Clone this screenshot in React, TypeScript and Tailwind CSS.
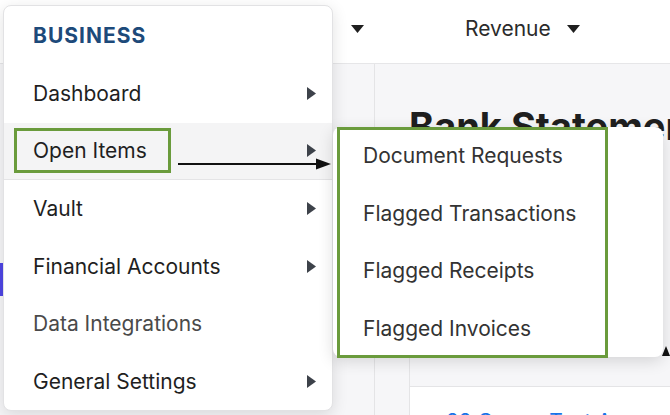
import React from 'react';

const mainItems = [
  { label: 'Dashboard', sub: true },
  { label: 'Open Items', sub: true, active: true },
  { label: 'Vault', sub: true },
  { label: 'Financial Accounts', sub: true },
  { label: 'Data Integrations', sub: false },
  { label: 'General Settings', sub: true },
];

const openItems = ['Document Requests', 'Flagged Transactions', 'Flagged Receipts', 'Flagged Invoices'];

const Caret: React.FC = () => (
  <svg width="13" height="8" viewBox="0 0 13 8" className="shrink-0">
    <polygon points="0,0 13,0 6.5,8" fill="#1f1f1f" />
  </svg>
);

const Chevron: React.FC = () => (
  <svg width="9" height="13" viewBox="0 0 9 13" className="shrink-0">
    <polygon points="0,0 9,6.5 0,13" fill="#3d424a" />
  </svg>
);

const App: React.FC = () => {
  return (
    <div
      className="relative w-[670px] h-[415px] overflow-hidden bg-[#f6f6f8]"
      style={{ fontFamily: 'Inter, "Liberation Sans", sans-serif' }}
    >
      {/* top bar */}
      <div className="h-[64px] bg-white border-b border-[#e6e6e8] flex items-center pb-[6px]">
        <div className="w-[351px] shrink-0" />
        <Caret />
        <span className="ml-[101px] text-[21px] text-[#2b2b2b]">Revenue</span>
        <span className="ml-[16px]">
          <Caret />
        </span>
      </div>

      {/* page body */}
      <div className="flex h-[351px]">
        <div className="w-[375px] shrink-0 border-r border-[#e4e4e6] bg-[#f6f6f8] pt-[199px]">
          <div className="w-[3px] h-[33px] bg-[#4f46e5]" />
        </div>
        <div className="flex-1 min-w-0 flex flex-col">
          <div className="pl-[34px] pt-[39px] h-[86px]">
            <h1 className="text-[38px] leading-[46px] font-bold text-[#1f1f1f] whitespace-nowrap">Bank Statements</h1>
          </div>
          <div className="ml-[34px] flex-1 flex flex-col border-l border-[#e4e4e6]">
            <div className="h-[237px] shrink-0" />
            <div className="flex-1 bg-white border-t border-[#e4e4e6] pl-[36px] pt-[21px]">
              <span className="text-[21px] leading-[28px] text-[#1a73e8] whitespace-nowrap">22 Congo Test Account</span>
            </div>
          </div>
        </div>
      </div>

      {/* hidden submenu tip peeking out */}
      <svg width="8" height="10" viewBox="0 0 8 10" className="absolute left-[662px] top-[346px]">
        <polygon points="4,0 8,10 0,10" fill="#111" />
      </svg>

      {/* main dropdown menu */}
      <div className="absolute left-[3px] top-[5px] w-[330px] rounded-[8px] bg-white border border-[#e2e2e4] shadow-[0_4px_16px_rgba(0,0,0,0.12)] overflow-hidden">
        <div className="h-[59px] flex items-center pl-[29px]">
          <span className="text-[21px] font-bold tracking-[1px] text-[#1d4a7a]">BUSINESS</span>
        </div>
        {mainItems.map((item) => (
          <div
            key={item.label}
            className={
              item.active
                ? 'relative h-[57.5px] flex items-center justify-between pl-[29px] pr-[16px] bg-[#f4f4f5] border-b border-[#e4e4e6]'
                : 'relative h-[57.5px] flex items-center justify-between pl-[29px] pr-[16px]'
            }
          >
            <span className={item.sub ? 'text-[21px] text-[#1f1f1f]' : 'text-[21px] text-[#4a4a4a]'}>{item.label}</span>
            {item.sub && <Chevron />}
            {item.active && (
              <div className="absolute left-[10px] top-[5px] w-[157px] h-[45px] border-[3px] border-[#6a9b3c]" />
            )}
          </div>
        ))}
      </div>

      {/* arrow annotation */}
      <svg width="156" height="14" viewBox="0 0 156 14" className="absolute left-[176px] top-[157px]">
        <line x1="2" y1="7" x2="144" y2="7" stroke="#111" strokeWidth="2" />
        <polygon points="140,1.5 155,7 140,12.5" fill="#111" />
      </svg>

      {/* open items submenu */}
      <div className="absolute left-[333px] top-[127px] w-[330px] h-[230px] rounded-[8px] bg-white shadow-[0_4px_16px_rgba(0,0,0,0.14)]">
        {openItems.map((label) => (
          <div key={label} className="h-[57.5px] flex items-center pl-[30px]">
            <span className="text-[21px] text-[#333333]">{label}</span>
          </div>
        ))}
      </div>
      <div className="absolute left-[337px] top-[127px] w-[271px] h-[231px] border-[3px] border-[#6a9b3c]" />
    </div>
  );
};

export default App;
